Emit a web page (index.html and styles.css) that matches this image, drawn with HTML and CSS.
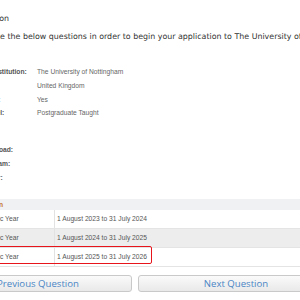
FILE: index.html
```html
<!DOCTYPE html>
<html lang="en">
<head>
<meta charset="utf-8">
<title>Application</title>
<link rel="stylesheet" href="styles.css">
</head>
<body>
<div class="page">
  <h1 class="title">Application</h1>
  <p class="intro">Please complete the below questions in order to begin your application to The University of Nottingham.</p>

  <dl class="details">
    <div class="row"><dt>Awarding Institution:</dt><dd>The University of Nottingham</dd></div>
    <div class="row"><dt>Country:</dt><dd>United Kingdom</dd></div>
    <div class="row"><dt>Scholarship:</dt><dd>Yes</dd></div>
    <div class="row"><dt>Course Level:</dt><dd>Postgraduate Taught</dd></div>
  </dl>

  <dl class="details details-second">
    <div class="row"><dt>Study Workload:</dt><dd></dd></div>
    <div class="row"><dt>Study Program:</dt><dd></dd></div>
    <div class="row"><dt>Chosen Year:</dt><dd></dd></div>
  </dl>

  <div class="session-wrap">
    <table class="sessions">
      <thead>
        <tr><th colspan="2">Academic Session</th></tr>
      </thead>
      <tbody>
        <tr><td class="year-label">Academic Year</td><td class="year-range">1 August 2023 to 31 July 2024</td></tr>
        <tr class="alt"><td class="year-label">Academic Year</td><td class="year-range">1 August 2024 to 31 July 2025</td></tr>
        <tr><td class="year-label">Academic Year</td><td class="year-range">1 August 2025 to 31 July 2026</td></tr>
      </tbody>
    </table>
    <div class="highlight"></div>
  </div>

  <div class="buttons">
    <button class="btn" type="button">Previous Question</button>
    <button class="btn" type="button">Next Question</button>
  </div>
</div>
</body>
</html>
```

FILE: styles.css
```css
html, body {
  margin: 0;
  padding: 0;
  background: #ffffff;
  overflow: hidden;
}

.page {
  margin-left: -57px;
  width: 700px;
  font-family: "Liberation Sans", Arial, sans-serif;
}

.title {
  margin: 12px 0 0 0;
  height: 14px;
  line-height: 14px;
  font-family: "DejaVu Sans", Verdana, sans-serif;
  font-size: 7.9px;
  font-weight: normal;
  color: #333333;
  text-indent: 22px;
}

.intro {
  margin: 4px 0 0 0;
  height: 14px;
  line-height: 14px;
  font-family: "DejaVu Sans", Verdana, sans-serif;
  font-size: 7.9px;
  color: #333333;
  white-space: nowrap;
  text-indent: -3px;
}

.details {
  margin: 21px 0 0 17px;
  padding: 0;
}

.details-second {
  margin-top: 23px;
}

.row {
  display: flex;
  height: 13.8px;
  line-height: 13.8px;
  font-size: 6.7px;
}

.row dt {
  width: 77px;
  flex: none;
  font-weight: bold;
  color: #555555;
  white-space: nowrap;
}

.row dd {
  margin: 0;
  color: #666666;
  white-space: nowrap;
}

.session-wrap {
  position: relative;
  margin-top: 14px;
  margin-left: 24px;
}

.sessions {
  border-collapse: collapse;
  width: 600px;
  font-size: 6.7px;
  color: #555555;
}

.sessions th {
  height: 11px;
  padding: 0 0 0 4px;
  text-indent: -27px;
  text-align: left;
  background: #eff1f3;
  color: #c8782d;
  font-weight: bold;
  line-height: 11px;
}

.sessions td {
  height: 18px;
  padding: 0;
  border-bottom: 1px solid #e4e4e4;
}

.sessions .alt td {
  background: #ededed;
}

.sessions .year-label {
  width: 80px;
  padding-left: 7px;
  border-right: 1px solid #e2e2e2;
}

.sessions .year-range {
  padding-left: 2px;
}

.highlight {
  position: absolute;
  left: 0;
  top: 47px;
  width: 183px;
  height: 16px;
  border: 1.5px solid #e8141c;
  border-radius: 2px;
}

.buttons {
  display: flex;
  gap: 6px;
  margin-top: 8px;
  margin-left: -3px;
}

.btn {
  box-sizing: border-box;
  width: 192px;
  height: 17px;
  padding: 0 0 0 4px;
  border: 1px solid #c9c9c9;
  border-radius: 3px;
  background: linear-gradient(#fafafa, #e9e9e9);
  color: #4a86c5;
  font-family: "Open Sans", "Segoe UI", sans-serif;
  font-size: 9.6px;
  line-height: 15px;
}
```
